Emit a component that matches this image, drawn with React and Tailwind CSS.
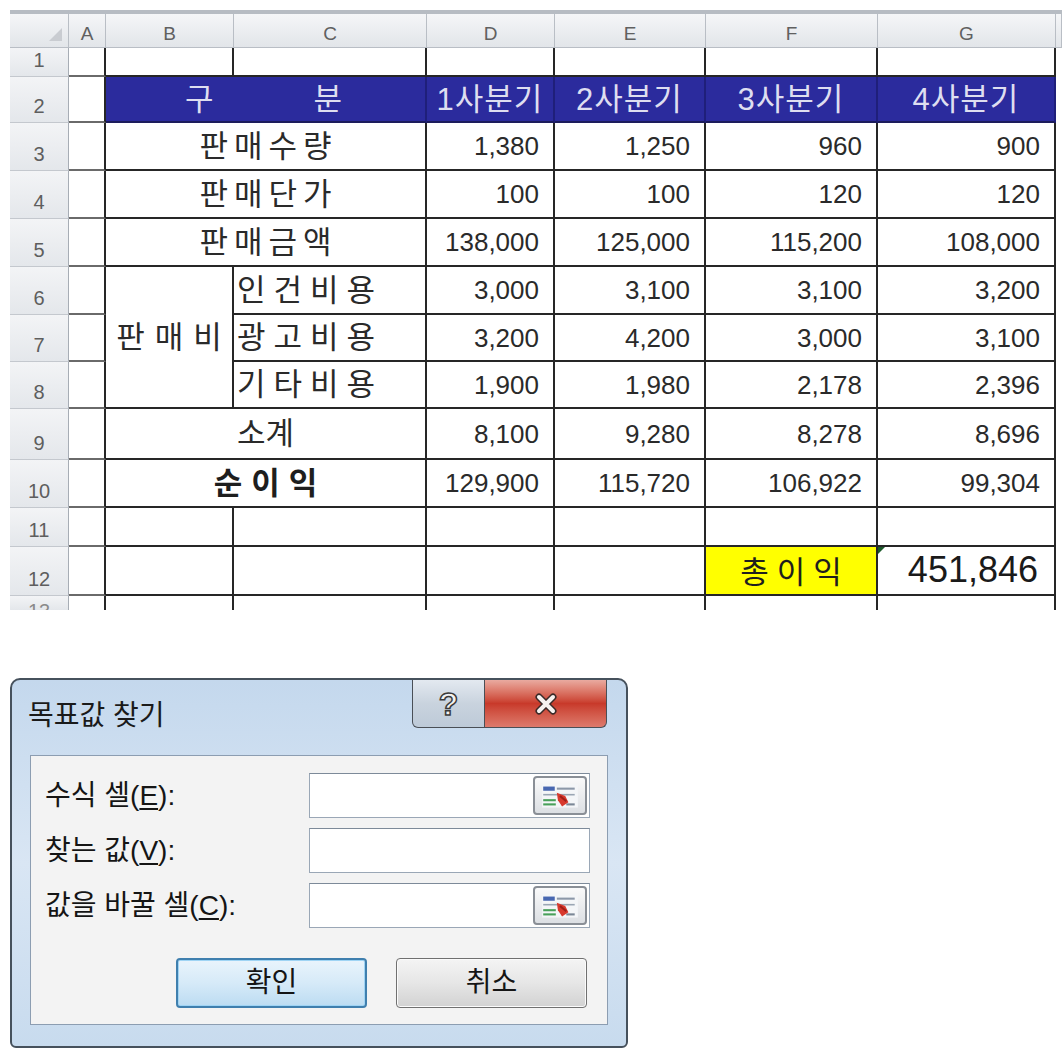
import React from 'react';

// 판매 실적 표 + 목표값 찾기 대화상자
const LINE = 'border-r-2 border-b-2 border-[#262626]';
const NUM = `${LINE} flex items-center justify-end pr-[14px] text-[26px] leading-none text-[#2a2a2a] bg-white`;
const HEAD = 'flex items-end justify-center pb-[4px] bg-gradient-to-b from-[#f5f6f8] to-[#e2e5e9] border-r border-b border-[#b9bec5] text-[19px] leading-none text-[#606060]';
const ROWHEAD = 'flex items-end justify-center pb-[6px] bg-gradient-to-b from-[#f3f4f6] to-[#e4e7eb] border-r border-r-[#a7adb5] border-b border-b-[#c4c8ce] text-[20px] leading-none text-[#5e5e5e]';
const ACELL = 'bg-white border-r-2 border-r-[#262626] border-b-2 border-b-[#6a6a6a]';

const rows = [
  { n: 3, label: '판매수량', v: ['1,380', '1,250', '960', '900'] },
  { n: 4, label: '판매단가', v: ['100', '100', '120', '120'] },
  { n: 5, label: '판매금액', v: ['138,000', '125,000', '115,200', '108,000'] },
];

const costs = [
  { n: 6, label: '인건비용', v: ['3,000', '3,100', '3,100', '3,200'] },
  { n: 7, label: '광고비용', v: ['3,200', '4,200', '3,000', '3,100'] },
  { n: 8, label: '기타비용', v: ['1,900', '1,980', '2,178', '2,396'] },
];

function Nums({ v }) {
  return v.map((x, i) => (
    <div key={i} className={NUM}>{x}</div>
  ));
}

function Edge() {
  return <div className="bg-white" />;
}

function Sheet() {
  return (
    <div className="pt-[10px] h-[612px] overflow-hidden">
      <div className="h-[4px] ml-[10px] bg-[#b7bcc3]" />
      <div className="ml-[10px] grid grid-cols-[59px_37px_128px_193px_128px_151px_172px_178px_6px] grid-rows-[34px_29px_46px_48px_48px_48px_48px_47px_47px_51px_48px_39px_49px_14px]">
        {/* column header */}
        <div className={`${HEAD} relative`}>
          <div className="absolute right-[6px] bottom-[6px] w-0 h-0 border-l-[13px] border-l-transparent border-b-[13px] border-b-[#c9ccd1]" />
        </div>
        {['A', 'B', 'C', 'D', 'E', 'F', 'G'].map((c) => (
          <div key={c} className={HEAD}>{c}</div>
        ))}
        <div className={HEAD} />

        {/* row 1 */}
        <div className={ROWHEAD}>1</div>
        <div className={ACELL} />
        <div className={`${LINE} bg-white`} />
        <div className={`${LINE} bg-white`} />
        <div className={`${LINE} bg-white`} />
        <div className={`${LINE} bg-white`} />
        <div className={`${LINE} bg-white`} />
        <div className={`${LINE} bg-white`} />
        <Edge />

        {/* row 2 */}
        <div className={ROWHEAD}>2</div>
        <div className={ACELL} />
        <div className="col-span-2 flex items-center justify-center gap-[100px] bg-[#2b2b9d] border-r-2 border-r-[#1f1f7a] border-b-2 border-b-[#1c1c5c] text-[31px] leading-none text-[#dedef0] pr-[4px]">
          <span>구</span>
          <span>분</span>
        </div>
        {['1사분기', '2사분기', '3사분기', '4사분기'].map((q) => (
          <div key={q} className="flex items-center justify-center bg-[#2b2b9d] border-r-2 border-r-[#1f1f7a] border-b-2 border-b-[#1c1c5c] text-[31px] tracking-[1px] leading-none text-[#dedef0]">
            {q}
          </div>
        ))}
        <Edge />

        {/* rows 3-5 */}
        {rows.map((r) => (
          <React.Fragment key={r.n}>
            <div className={ROWHEAD}>{r.n}</div>
            <div className={ACELL} />
            <div className={`${LINE} col-span-2 flex items-center justify-center bg-white text-[31px] leading-none tracking-[6px] pl-[6px] text-[#2a2a2a]`}>
              {r.label}
            </div>
            <Nums v={r.v} />
            <Edge />
          </React.Fragment>
        ))}

        {/* rows 6-8 */}
        {costs.map((r, i) => (
          <React.Fragment key={r.n}>
            <div className={ROWHEAD}>{r.n}</div>
            <div className={ACELL} />
            {i === 0 && (
              <div className={`${LINE} row-span-3 flex items-center justify-center bg-white text-[31px] leading-none tracking-[10px] pl-[10px] text-[#2a2a2a]`}>
                판매비
              </div>
            )}
            <div className={`${LINE} flex items-center bg-white pl-[3px] text-[31px] leading-none tracking-[8px] text-[#2a2a2a]`}>
              {r.label}
            </div>
            <Nums v={r.v} />
            <Edge />
          </React.Fragment>
        ))}

        {/* row 9 */}
        <div className={ROWHEAD}>9</div>
        <div className={ACELL} />
        <div className={`${LINE} col-span-2 flex items-center justify-center bg-white text-[31px] leading-none text-[#2a2a2a]`}>
          소계
        </div>
        <Nums v={['8,100', '9,280', '8,278', '8,696']} />
        <Edge />

        {/* row 10 */}
        <div className={ROWHEAD}>10</div>
        <div className={ACELL} />
        <div className={`${LINE} col-span-2 flex items-center justify-center bg-white text-[31px] font-bold leading-none tracking-[9px] pl-[9px] text-[#1e1e1e]`}>
          순이익
        </div>
        <Nums v={['129,900', '115,720', '106,922', '99,304']} />
        <Edge />

        {/* row 11 */}
        <div className={ROWHEAD}>11</div>
        <div className={ACELL} />
        <div className={`${LINE} bg-white`} />
        <div className={`${LINE} bg-white`} />
        <div className={`${LINE} bg-white`} />
        <div className={`${LINE} bg-white`} />
        <div className={`${LINE} bg-white`} />
        <div className={`${LINE} bg-white`} />
        <Edge />

        {/* row 12 */}
        <div className={ROWHEAD}>12</div>
        <div className={ACELL} />
        <div className={`${LINE} bg-white`} />
        <div className={`${LINE} bg-white`} />
        <div className={`${LINE} bg-white`} />
        <div className={`${LINE} bg-white`} />
        <div className={`${LINE} flex items-end justify-center pb-[6px] bg-[#ffff00] text-[31px] leading-none tracking-[8px] pl-[8px] text-[#1e1e1e]`}>
          총이익
        </div>
        <div className={`${LINE} relative flex items-end justify-end pb-[6px] pr-[16px] bg-white text-[36px] leading-none text-[#1a1a1a]`}>
          <div className="absolute left-0 top-0 w-0 h-0 border-t-[7px] border-t-[#1c5a2a] border-r-[7px] border-r-transparent" />
          451,846
        </div>
        <Edge />

        {/* row 13 (cut off by the picture's edge) */}
        <div className="flex justify-center pt-[5px] bg-gradient-to-b from-[#f3f4f6] to-[#e4e7eb] border-r border-r-[#a7adb5] text-[20px] leading-none text-[#8a8a8a] overflow-hidden">13</div>
        <div className="bg-white border-r-2 border-r-[#262626]" />
        <div className="bg-white border-r-2 border-r-[#262626]" />
        <div className="bg-white border-r-2 border-r-[#262626]" />
        <div className="bg-white border-r-2 border-r-[#262626]" />
        <div className="bg-white border-r-2 border-r-[#262626]" />
        <div className="bg-white border-r-2 border-r-[#262626]" />
        <div className="bg-white border-r-2 border-r-[#262626]" />
        <Edge />
      </div>
    </div>
  );
}

function RefIcon() {
  return (
    <svg width="42" height="30" viewBox="0 0 40 28">
      <rect x="3" y="3" width="34" height="22" fill="#f4f6f8" />
      <rect x="4" y="5" width="11" height="4" fill="#4867b0" />
      <rect x="17" y="6" width="17" height="2" fill="#8c98a8" />
      <rect x="4" y="12" width="30" height="1.5" fill="#9aa6b4" />
      <rect x="4" y="17" width="12" height="2" fill="#49a05a" />
      <rect x="4" y="21" width="12" height="2" fill="#49a05a" />
      <rect x="26" y="21" width="8" height="2" fill="#7b8796" />
      <path d="M17 11 L25 14 L28 20 L22 24 L18 18 Z" fill="#d8392d" />
      <path d="M20 14 L26 19" stroke="#a01f18" strokeWidth="2" />
    </svg>
  );
}

function Field({ label, k, withRef }) {
  return (
    <div className="flex items-center h-[45px]">
      <div className="w-[278px] pl-[14px] text-[28px] leading-none text-[#151515]">
        {label}(<span className="underline underline-offset-[3px]">{k}</span>):
      </div>
      <div className="w-[281px] h-[45px] flex items-center justify-end pr-[2px] bg-white border border-[#9aa7b6] border-t-[#7d8a99]">
        {withRef && (
          <div className="w-[54px] h-[39px] flex items-center justify-center rounded-[4px] border-2 border-[#8a8f96] bg-gradient-to-b from-[#fafafa] to-[#dcdfe3]">
            <RefIcon />
          </div>
        )}
      </div>
    </div>
  );
}

function Dialog() {
  return (
    <div className="ml-[10px] mt-[66px] w-[618px] h-[370px] flex flex-col rounded-t-[10px] rounded-b-[6px] border-2 border-[#46515c] bg-gradient-to-b from-[#c4d8ed] via-[#d9e6f4] to-[#c8dbee]">
      <div className="h-[75px] flex items-start justify-between">
        <div className="pl-[16px] pt-[22px] text-[28px] leading-none text-[#1a1a1a]">목표값 찾기</div>
        <div className="mr-[19px] flex">
          <div className="w-[73px] h-[48px] flex items-center justify-center rounded-bl-[6px] border border-t-0 border-[#4a4f56] bg-gradient-to-b from-[#e3e9f0] via-[#c9d3de] to-[#bdcad8] text-[32px] font-bold leading-none text-[#f2f2f2] [-webkit-text-stroke:1.5px_#3b3b3b]">
            ?
          </div>
          <div className="w-[122px] h-[48px] flex items-center justify-center rounded-br-[6px] border border-l-0 border-t-0 border-[#4a4f56] bg-gradient-to-b from-[#e9aaa0] via-[#c8392a] to-[#dd7a6c]">
            <svg width="30" height="24" viewBox="0 0 30 24">
              <path d="M8 5 L22 19 M22 5 L8 19" stroke="#3a2a28" strokeWidth="7" strokeLinecap="round" />
              <path d="M8 5 L22 19 M22 5 L8 19" stroke="#f7f2f0" strokeWidth="4" strokeLinecap="round" />
            </svg>
          </div>
        </div>
      </div>

      <div className="mx-[18px] h-[270px] border border-[#8c9db1] bg-[#f3f3f3] pt-[17px]">
        <div className="flex flex-col gap-[10px]">
          <Field label="수식 셀" k="E" withRef />
          <Field label="찾는 값" k="V" />
          <Field label="값을 바꿀 셀" k="C" withRef />
        </div>
        <div className="mt-[30px] pl-[145px] flex gap-[29px]">
          <div className="w-[191px] h-[50px] flex items-center justify-center rounded-[4px] border-2 border-[#3f7fae] bg-gradient-to-b from-[#e9f4fc] via-[#d6eaf8] to-[#bcdcf2] text-[28px] leading-none text-[#151515] shadow-[inset_0_0_0_1px_#9fd4f4]">
            확인
          </div>
          <div className="w-[191px] h-[50px] flex items-center justify-center rounded-[4px] border border-[#707070] bg-gradient-to-b from-[#f4f4f4] via-[#e6e6e6] to-[#d2d2d2] text-[28px] leading-none text-[#151515] shadow-[inset_0_0_0_1px_#fbfbfb]">
            취소
          </div>
        </div>
      </div>
    </div>
  );
}

export default function App() {
  return (
    <div className="w-[1062px] h-[1061px] bg-white font-['Liberation_Sans','Noto_Sans_CJK_KR',sans-serif] overflow-hidden">
      <Sheet />
      <Dialog />
    </div>
  );
}
